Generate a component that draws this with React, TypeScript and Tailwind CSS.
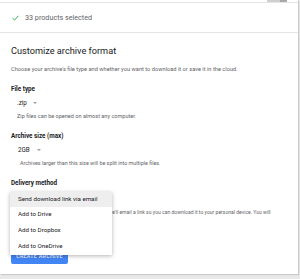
import React from "react";

export default function App() {
  const font = { fontFamily: "Roboto, 'Noto Sans', sans-serif" };
  return (
    <div className="relative w-[300px] h-[279px] overflow-hidden bg-[#e8e8e8]" style={font}>
      <div className="w-[298px] h-[274px] bg-white flex flex-col shadow-[1px_1px_1px_rgba(0,0,0,0.12)]">
        <div className="h-[3px] border-b border-[#e6e6e6] flex justify-end pr-[11px]">
          <div className="w-[20px] h-[2px] flex">
            <div className="w-[13px] h-[2px] bg-[#cfcfcf]" />
            <div className="w-[7px] h-[2px] bg-[#a8a8a8]" />
          </div>
        </div>
        <div className="h-[30px] border-b border-[#e6e6e6] flex items-center pl-[12px] gap-[6px]">
          <svg width="7" height="6" viewBox="0 0 7 6" className="mt-[1px]">
            <path d="M0.6 3.2 L2.5 5 L6.4 0.8" fill="none" stroke="#34a853" strokeWidth="1" />
          </svg>
          <span className="text-[7.2px] leading-[8px] text-[#5f6368]">33 products selected</span>
        </div>
        <div className="flex flex-col pl-[11px]">
          <div className="mt-[12px] text-[9.2px] leading-[12px] text-[#202124]">Customize archive format</div>
          <div className="mt-[8px] text-[5.7px] leading-[8px] text-[#5f6368] whitespace-nowrap">
            Choose your archive's file type and whether you want to download it or save it in the cloud.
          </div>
          <div className="mt-[12px] text-[6.3px] leading-[8px] font-bold text-[#202124]">File type</div>
          <div className="mt-[6px] ml-[6px] flex items-center gap-[6px] h-[8px]">
            <span className="text-[6.3px] leading-[8px] text-[#202124]">.zip</span>
            <svg width="4" height="2" viewBox="0 0 4 2"><path d="M0 0 L4 0 L2 2 Z" fill="#9aa0a6" /></svg>
          </div>
          <div className="mt-[5px] ml-[6px] text-[5.55px] leading-[8px] text-[#5f6368] whitespace-nowrap">
            Zip files can be opened on almost any computer.
          </div>
          <div className="mt-[12px] text-[6.3px] leading-[8px] font-bold text-[#202124]">Archive size (max)</div>
          <div className="mt-[6px] ml-[7px] flex items-center gap-[7px] h-[8px]">
            <span className="text-[6.3px] leading-[8px] text-[#202124]">2GB</span>
            <svg width="4" height="2" viewBox="0 0 4 2"><path d="M0 0 L4 0 L2 2 Z" fill="#9aa0a6" /></svg>
          </div>
          <div className="mt-[5px] ml-[9px] text-[5.4px] leading-[8px] text-[#5f6368] whitespace-nowrap">
            Archives larger than this size will be split into multiple files.
          </div>
          <div className="mt-[12px] text-[6.3px] leading-[8px] font-bold text-[#202124]">Delivery method</div>
          <div className="mt-[21px] ml-[9px] text-[5.05px] leading-[8px] text-[#5f6368] whitespace-nowrap">
            When you choose this delivery method, we'll email a link so you can download it to your personal device. You will
          </div>
          <div className="mt-[33px] w-[57px] h-[15px] rounded-[2px] bg-[#4285f4] flex items-center justify-center">
            <span className="text-[5.3px] font-medium tracking-[0.3px] text-white">CREATE ARCHIVE</span>
          </div>
        </div>
      </div>
      <div className="absolute left-[10px] top-[192px] w-[102px] py-0 bg-white shadow-[0_1px_4px_rgba(0,0,0,0.3)] flex flex-col">
        <div className="h-[15px] bg-[#eeeeee] flex items-center pl-[8px] text-[6.2px] text-[#202124]">Send download link via email</div>
        <div className="h-[16px] flex items-center pl-[8px] text-[6.2px] text-[#202124]">Add to Drive</div>
        <div className="h-[16px] flex items-center pl-[8px] text-[6.2px] text-[#202124]">Add to Dropbox</div>
        <div className="h-[16px] flex items-center pl-[8px] text-[6.2px] text-[#202124]">Add to OneDrive</div>
      </div>
    </div>
  );
}
